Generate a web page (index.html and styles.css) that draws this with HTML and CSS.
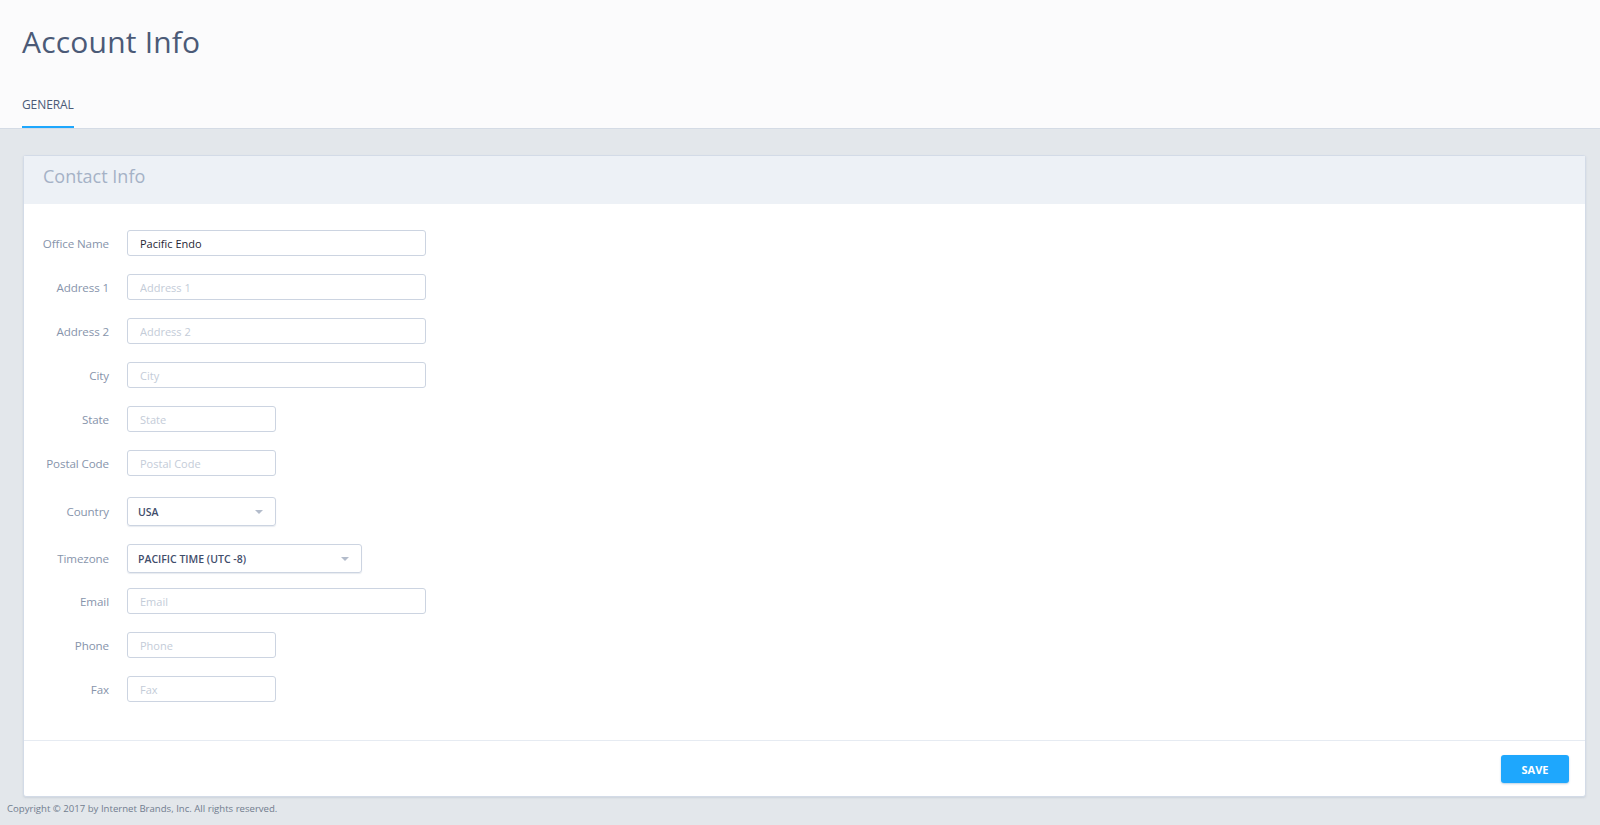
FILE: index.html
```html
<!DOCTYPE html>
<html>
<head>
<meta charset="utf-8">
<link rel="stylesheet" href="styles.css">
</head>
<body>
<header class="page-header">
  <h1 class="page-title">Account Info</h1>
  <nav class="tabs">
    <a class="tab active">GENERAL</a>
  </nav>
</header>
<main class="content">
  <section class="card">
    <div class="card-header">Contact Info</div>
    <div class="card-body">
      <div class="row"><label class="lbl">Office Name</label><input class="inp wide filled" value="Pacific Endo"></div>
      <div class="row"><label class="lbl">Address 1</label><input class="inp wide" placeholder="Address 1"></div>
      <div class="row"><label class="lbl">Address 2</label><input class="inp wide" placeholder="Address 2"></div>
      <div class="row"><label class="lbl">City</label><input class="inp wide" placeholder="City"></div>
      <div class="row"><label class="lbl">State</label><input class="inp small" placeholder="State"></div>
      <div class="row"><label class="lbl">Postal Code</label><input class="inp small" placeholder="Postal Code"></div>
      <div class="row sel-row"><label class="lbl">Country</label><div class="sel small">USA<span class="caret"></span></div></div>
      <div class="row sel-row"><label class="lbl">Timezone</label><div class="sel mid">PACIFIC TIME (UTC -8)<span class="caret"></span></div></div>
      <div class="row"><label class="lbl">Email</label><input class="inp wide" placeholder="Email"></div>
      <div class="row"><label class="lbl">Phone</label><input class="inp small" placeholder="Phone"></div>
      <div class="row"><label class="lbl">Fax</label><input class="inp small" placeholder="Fax"></div>
    </div>
    <div class="card-footer">
      <button class="btn-save">SAVE</button>
    </div>
  </section>
  <footer class="copyright">Copyright © 2017 by Internet Brands, Inc. All rights reserved.</footer>
</main>
</body>
</html>
```

FILE: styles.css
```css
html, body {
  margin: 0;
  padding: 0;
}
body {
  background: #e3e7eb;
  font-family: "Open Sans", "Liberation Sans", sans-serif;
  color: #4a5a78;
  height: 825px;
  overflow: hidden;
}
.page-header {
  background: #fbfbfc;
  border-bottom: 1px solid #d4dbe5;
  padding: 0 0 0 22px;
  height: 128px;
  display: flex;
  flex-direction: column;
}
.page-title {
  margin: 0;
  padding-top: 22px;
  font-weight: 400;
  font-size: 30px;
  line-height: 40px;
  color: #4b5a77;
  letter-spacing: 0.2px;
}
.tabs {
  margin-top: auto;
  display: flex;
}
.tab {
  display: block;
  font-size: 12px;
  color: #4b5a77;
  padding-bottom: 14px;
  border-bottom: 2px solid #1ea7fd;
  line-height: 14px;
  letter-spacing: -0.1px;
}
.content {
  padding: 26px 14px 0 23px;
}
.card {
  background: #fff;
  border: 1px solid #d3dbe7;
  border-radius: 3px;
  box-shadow: 0 1px 2px rgba(160, 172, 190, 0.35);
}
.card-header {
  background: #edf1f6;
  height: 48px;
  line-height: 41px;
  padding-left: 19px;
  font-size: 18px;
  color: #a5b2c6;
}
.card-body {
  padding: 26px 0 20px 0;
  border-bottom: 1px solid #e6ebf2;
}
.row {
  display: flex;
  align-items: center;
  gap: 18px;
  height: 26px;
  margin-bottom: 18px;
}
.row.sel-row {
  height: 29px;
  padding-top: 3px;
  margin-bottom: 15px;
}
.lbl {
  width: 85px;
  text-align: right;
  font-size: 11.6px;
  color: #8794ab;
  letter-spacing: -0.1px;
}
.inp {
  box-sizing: border-box;
  height: 26px;
  border: 1px solid #ccd4e1;
  border-radius: 3px;
  padding: 0 12px;
  font-family: "Open Sans", "Liberation Sans", sans-serif;
  font-size: 11px;
  color: #1f2735;
  outline: none;
  background: #fff;
}
.inp::placeholder {
  color: #c4ccd8;
}
.wide { width: 299px; }
.small { width: 149px; }
.mid { width: 235px; }
.sel {
  box-sizing: border-box;
  height: 29px;
  border: 1px solid #ccd4e1;
  border-radius: 3px;
  padding: 0 10px;
  display: flex;
  align-items: center;
  justify-content: space-between;
  font-size: 10.5px;
  font-weight: 600;
  color: #3f4d6b;
  box-shadow: 0 1px 1px rgba(180, 190, 205, 0.3);
}
.caret {
  width: 0;
  height: 0;
  border-left: 4px solid transparent;
  border-right: 4px solid transparent;
  border-top: 4px solid #b3bccb;
  margin-right: 2px;
}
.card-footer {
  display: flex;
  justify-content: flex-end;
  padding: 14px 16px 13px 0;
}
.btn-save {
  width: 68px;
  height: 28px;
  border: none;
  border-radius: 3px;
  background: #1ea7fd;
  color: #fff;
  font-family: "Open Sans", "Liberation Sans", sans-serif;
  font-weight: 700;
  font-size: 11px;
  box-shadow: 0 1px 2px rgba(30, 100, 160, 0.3);
}
.copyright {
  margin-left: -16px;
  padding-top: 5px;
  font-size: 9.6px;
  color: #727d8f;
}
```
